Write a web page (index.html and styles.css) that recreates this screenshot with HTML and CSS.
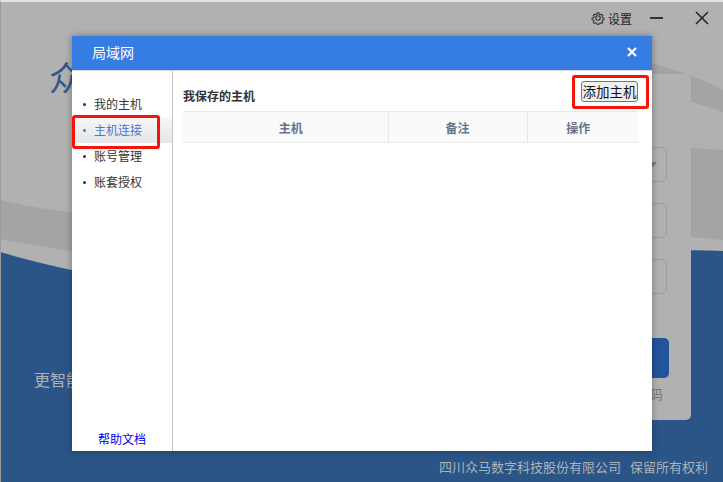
FILE: index.html
```html
<!DOCTYPE html>
<html lang="zh-CN">
<head>
  <meta charset="UTF-8">
  <title>局域网</title>
  <link rel="stylesheet" href="styles.css">
</head>
<body>
  <div class="app">
    <!-- background waves of the login page -->
    <svg class="waves" viewBox="0 0 723 482">
      <path d="M0,200 Q35,209 100,216 L100,256 Q40,246 0,239Z" fill="#a4a4a4"/>
      <path d="M640,60 Q690,72 723,90 L723,112 Q700,105 640,84Z" fill="#a4a4a4"/>
      <path d="M691,148 L723,150 L723,240 L691,237Z" fill="#a4a4a4"/>
      <path d="M0,252 Q40,264 100,276 L500,276 Q620,246 723,251 L723,482 L0,482Z" fill="#2b5587"/>
    </svg>

    <header class="topbar">
      <svg class="gear" viewBox="0 0 24 24">
        <path d="M10.3,2h3.4l.5,3 2.2,1 2.5-1.7 2.4,2.4-1.7,2.5 1,2.2 3,.5v3.4l-3,.5-1,2.2 1.7,2.5-2.4,2.4-2.5-1.7-2.2,1-.5,3h-3.4l-.5-3-2.2-1-2.5,1.7-2.4-2.4 1.7-2.5-1-2.2-3-.5v-3.4l3-.5 1-2.2-1.7-2.5 2.4-2.4 2.5,1.7 2.2-1z" transform="translate(12 12) scale(.88) translate(-12 -12)" fill="none" stroke="#333" stroke-width="2"/>
        <circle cx="12" cy="12" r="3.8" fill="none" stroke="#333" stroke-width="2"/>
      </svg>
      <span class="settings">设置</span>
      <span class="minimize"></span>
      <svg class="quit" viewBox="0 0 14 14">
        <path d="M1,1 L13,13 M13,1 L1,13" stroke="#222" stroke-width="1.5" fill="none"/>
      </svg>
    </header>

    <main class="login">
      <div class="intro">
        <div class="logo">众</div>
        <div class="slogan">更智能</div>
      </div>
      <div class="card">
        <div class="field"><span class="arrow"></span></div>
        <div class="field"></div>
        <div class="field"></div>
        <div class="submit"></div>
        <div class="forgot">忘记密码</div>
      </div>
    </main>

    <footer class="footer"><span>四川众马数字科技股份有限公司</span><span class="rights">保留所有权利</span></footer>

    <!-- LAN dialog -->
    <section class="dialog">
      <div class="dialog-head">
        <span>局域网</span>
        <svg class="dialog-close" viewBox="0 0 10 10">
          <path d="M1,1 L9,9 M9,1 L1,9" stroke="#fff" stroke-width="2.2" fill="none"/>
        </svg>
      </div>
      <div class="dialog-body">
        <nav class="side">
          <ul class="side-list">
            <li>我的主机</li>
            <li class="active">主机连接</li>
            <li>账号管理</li>
            <li>账套授权</li>
          </ul>
          <a class="help" href="#">帮助文档</a>
        </nav>
        <div class="content">
          <div class="content-top">
            <h2 class="content-title">我保存的主机</h2>
            <button class="add-btn">添加主机</button>
          </div>
          <table class="hosts">
            <thead>
              <tr>
                <th class="col-host">主机</th>
                <th class="col-note">备注</th>
                <th class="col-action">操作</th>
              </tr>
            </thead>
          </table>
        </div>
      </div>
    </section>

    <!-- red annotation boxes -->
    <div class="mark mark-side"></div>
    <div class="mark mark-add"></div>
  </div>
</body>
</html>
```

FILE: styles.css
```css
* {
  box-sizing: border-box;
}

body {
  margin: 0;
  font-family: "Noto Sans CJK SC", "Liberation Sans", sans-serif;
  font-size: 12px;
}

.app {
  position: relative;
  width: 723px;
  height: 482px;
  overflow: hidden;
  display: flex;
  flex-direction: column;
  background: #b1b1b1;
  border-top: 2px solid #e4e4e4;
  border-left: 1px solid #9c9c9c;
}

.waves {
  position: absolute;
  left: -1px;
  top: -2px;
  width: 723px;
  height: 482px;
}

/* top bar */
.topbar {
  position: relative;
  height: 34px;
  display: flex;
  align-items: center;
  justify-content: flex-end;
  padding: 0 14px 2px 0;
}
.gear {
  width: 14px;
  height: 14px;
  margin-right: 3px;
}
.settings {
  color: #222;
  font-size: 12px;
  margin-right: 18px;
}
.minimize {
  width: 13px;
  height: 2px;
  background: #333;
  margin-right: 32px;
}
.quit {
  width: 14px;
  height: 14px;
}

/* login page behind the dialog */
.login {
  position: relative;
  flex: 1;
  display: flex;
  justify-content: space-between;
  padding: 38px 32px 0 33px;
}
.logo {
  font-size: 34px;
  line-height: 40px;
  color: #33578a;
  margin: -17px 0 0 15px;
}
.slogan {
  font-size: 16px;
  line-height: 22px;
  color: #adb2b8;
  margin-top: 271px;
}
.card {
  width: 290px;
  height: 346px;
  background: #b1b1b1;
  border-radius: 5px;
  padding: 73px 24px 0 24px;
}
.field {
  position: relative;
  height: 35px;
  border: 1px solid #9d9d9d;
  border-radius: 5px;
  margin-bottom: 21px;
}
.arrow {
  position: absolute;
  right: 9px;
  top: 14px;
  border-left: 4px solid transparent;
  border-right: 4px solid transparent;
  border-top: 5px solid #7d7d7d;
}
.submit {
  height: 40px;
  margin-top: 44px;
  margin-right: -2px;
  background: #22539b;
  border-radius: 5px;
}
.forgot {
  margin-top: 6px;
  text-align: right;
  font-size: 13px;
  color: #757575;
  padding-right: 4px;
}

.footer {
  position: relative;
  height: 62px;
  padding: 37px 15px 0 0;
  display: flex;
  justify-content: flex-end;
  gap: 9px;
  font-size: 13px;
  line-height: 20px;
  color: #adb2b8;
}

/* dialog */
.dialog {
  position: absolute;
  left: 71px;
  top: 34px;
  width: 580px;
  height: 415px;
  display: flex;
  flex-direction: column;
  background: #fff;
  box-shadow: 0 0 7px rgba(0, 0, 0, 0.35);
}
.dialog-head {
  height: 34px;
  flex-shrink: 0;
  display: flex;
  align-items: center;
  justify-content: space-between;
  padding: 0 15px 2px 20px;
  background: #357de2;
  color: #fff;
  font-size: 14px;
}
.dialog-close {
  width: 10px;
  height: 10px;
}
.dialog-body {
  flex: 1;
  display: flex;
  border-top: 1px solid #d5d5d5;
}

.side {
  width: 101px;
  display: flex;
  flex-direction: column;
  border-right: 1px solid #c4c4c4;
}
.side-list {
  list-style: none;
  margin: 0;
  padding: 20px 0 0 0;
}
.side-list li {
  position: relative;
  height: 26px;
  line-height: 26px;
  padding-left: 22px;
  color: #333;
}
.side-list li::before {
  content: "";
  position: absolute;
  left: 11px;
  top: 12px;
  width: 3px;
  height: 3px;
  border-radius: 50%;
  background: #333;
}
.side-list li.active {
  color: #4a76d4;
  background: linear-gradient(#f7f7f8, #e4e6e9);
}
.side-list li.active::before {
  background: #357de2;
}
.help {
  margin-top: auto;
  padding: 0 0 4px 26px;
  color: #0000ee;
  text-decoration: none;
  line-height: 17px;
}

.content {
  flex: 1;
  padding: 0 14px 0 10px;
}
.content-top {
  height: 40px;
  display: flex;
  align-items: flex-start;
  justify-content: space-between;
}
.content-title {
  margin: 16px 0 0 0;
  font-size: 12px;
  line-height: 17px;
  font-weight: 700;
  color: #333;
}
.add-btn {
  margin-top: 10px;
  width: 57px;
  height: 21px;
  padding: 0;
  font-family: inherit;
  font-size: 13.5px;
  line-height: 17px;
  white-space: nowrap;
  color: #111;
  background: #efefef;
  border: 1px solid #767676;
  border-radius: 3px;
}

.hosts {
  width: 100%;
  border-collapse: collapse;
  table-layout: fixed;
}
.hosts th {
  height: 31px;
  padding: 0;
  background: #fafafa;
  border-top: 1px solid #e8e8e8;
  border-bottom: 1px solid #e8e8e8;
  border-right: 1px solid #e8e8e8;
  color: #64748a;
  font-size: 12px;
  font-weight: 700;
}
.hosts th:last-child {
  border-right: 0;
}
.hosts .col-host {
  width: 205px;
  padding-left: 11px;
}
.hosts .col-note {
  width: 139px;
}
.hosts .col-action {
  padding-right: 9px;
}

/* annotation boxes */
.mark {
  position: absolute;
  border: 3px solid #f5140c;
  border-radius: 3px;
}
.mark-side {
  left: 71px;
  top: 113px;
  width: 88px;
  height: 34px;
}
.mark-add {
  left: 571px;
  top: 73px;
  width: 77px;
  height: 34px;
}
```
